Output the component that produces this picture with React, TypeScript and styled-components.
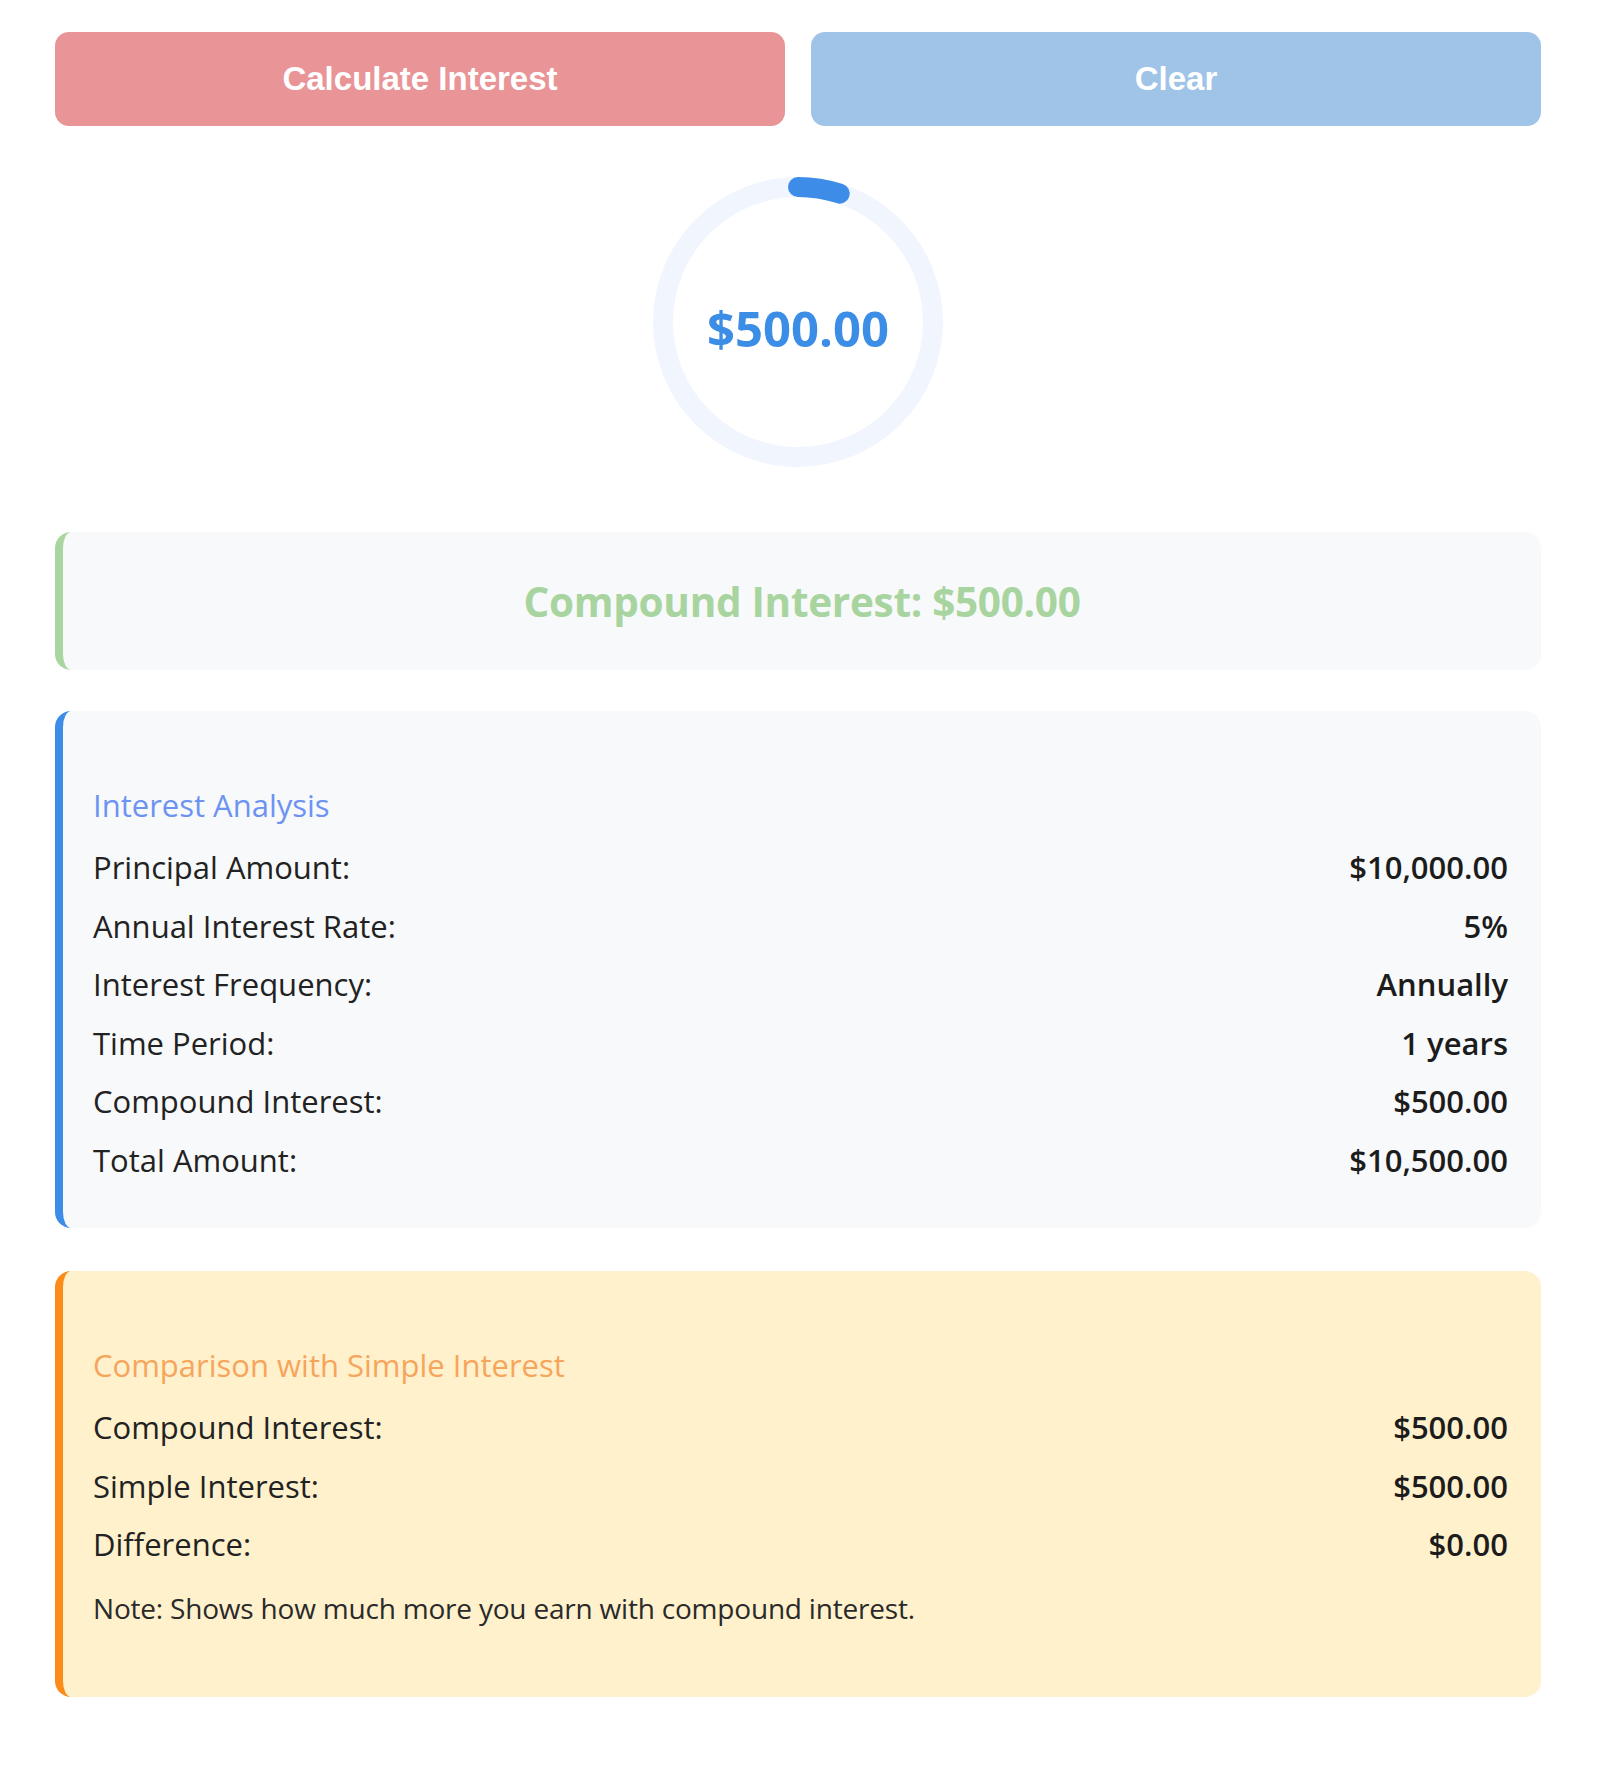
import React from 'react'
import styled, { createGlobalStyle } from 'styled-components'

const GlobalStyle = createGlobalStyle`
	body {
		margin: 0;
		background: #ffffff;
		font-family: "Open Sans", "Noto Sans", sans-serif;
		color: #222222;
	}
`

const Page = styled.div`
	padding: 32px 59px 80px 55px;
`

const ButtonRow = styled.div`
	display: grid;
	grid-template-columns: 1fr 1fr;
	gap: 26px;
`

interface ButtonProps {
	tone: 'red' | 'blue';
}

const ActionButton = styled.button<ButtonProps>`
	height: 94px;
	border: none;
	border-radius: 14px;
	background: ${({ tone }) => tone === 'red' ? '#e99597' : '#9fc4e8'};
	color: #ffffff;
	font-family: "Liberation Sans", Arial, sans-serif;
	font-weight: 700;
	font-size: 33px;
	cursor: pointer;
`

const GaugeWrap = styled.div`
	position: relative;
	width: 300px;
	height: 300px;
	margin: 46px auto 0;
`

const GaugeValue = styled.div`
	position: absolute;
	inset: 0;
	display: flex;
	align-items: center;
	justify-content: center;
	padding-top: 12px;
	box-sizing: border-box;
	font-size: 49px;
	font-weight: 700;
	color: #3b8de6;
`

interface CardProps {
	accent: string;
	bg: string;
}

const Card = styled.div<CardProps>`
	background: ${({ bg }) => bg};
	border-left: 8px solid ${({ accent }) => accent};
	border-radius: 16px;
	box-sizing: border-box;
`

const SummaryCard = styled(Card)`
	margin-top: 60px;
	height: 138px;
	display: flex;
	align-items: center;
	justify-content: center;
`

const SummaryText = styled.div`
	font-size: 40.5px;
	font-weight: 700;
	color: #a8d49f;
	letter-spacing: -0.3px;
`

interface DetailProps {
	gap: number;
}

const DetailCard = styled(Card)<DetailProps>`
	margin-top: ${({ gap }) => gap}px;
	padding: 40px 33px 39px 30px;
`

interface TitleProps {
	color: string;
}

const CardTitle = styled.h4<TitleProps>`
	margin: 32px 0 11px;
	font-size: 31px;
	line-height: 44px;
	font-weight: 400;
	color: ${({ color }) => color};
`

const Row = styled.div`
	display: flex;
	justify-content: space-between;
	align-items: center;
	height: 58.5px;
	font-size: 31px;
`

const Label = styled.span`
	color: #222222;
`

const Value = styled.span`
	font-weight: 600;
	color: #1c1c1c;
`

const Note = styled.p`
	margin: 14px 0 30px;
	font-size: 28px;
	line-height: 40px;
	color: #2a2a2a;
	letter-spacing: -0.2px;
`

const analysis = [
	['Principal Amount:', '$10,000.00'],
	['Annual Interest Rate:', '5%'],
	['Interest Frequency:', 'Annually'],
	['Time Period:', '1 years'],
	['Compound Interest:', '$500.00'],
	['Total Amount:', '$10,500.00'],
]

const comparison = [
	['Compound Interest:', '$500.00'],
	['Simple Interest:', '$500.00'],
	['Difference:', '$0.00'],
]

const Gauge = ({ ratio }: { ratio: number }) => {
	const r = 135
	const c = 2 * Math.PI * r
	return (
		<svg width="300" height="300" viewBox="0 0 300 300">
			<circle cx="150" cy="150" r={r} fill="none" stroke="#f1f5fe" strokeWidth="20" />
			<circle
				cx="150"
				cy="150"
				r={r}
				fill="none"
				stroke="#3d8ce8"
				strokeWidth="20"
				strokeLinecap="round"
				strokeDasharray={`${c * ratio} ${c}`}
				transform="rotate(-90 150 150)"
			/>
		</svg>
	)
}

export default function App() {
	return (
		<>
			<GlobalStyle />
			<Page>
				<ButtonRow>
					<ActionButton tone="red">Calculate Interest</ActionButton>
					<ActionButton tone="blue">Clear</ActionButton>
				</ButtonRow>

				<GaugeWrap>
					<Gauge ratio={0.05} />
					<GaugeValue>$500.00</GaugeValue>
				</GaugeWrap>

				<SummaryCard accent="#a9d5a1" bg="#f8f9fa">
					<SummaryText>Compound Interest: $500.00</SummaryText>
				</SummaryCard>

				<DetailCard gap={41} accent="#3c8ce8" bg="#f8f9fa">
					<CardTitle color="#6d93f2">Interest Analysis</CardTitle>
					{analysis.map(([label, value]) => (
						<Row key={label}>
							<Label>{label}</Label>
							<Value>{value}</Value>
						</Row>
					))}
				</DetailCard>

				<DetailCard gap={43} accent="#fb8c1a" bg="#fff1cc">
					<CardTitle color="#f6a55c">Comparison with Simple Interest</CardTitle>
					{comparison.map(([label, value]) => (
						<Row key={label}>
							<Label>{label}</Label>
							<Value>{value}</Value>
						</Row>
					))}
					<Note>Note: Shows how much more you earn with compound interest.</Note>
				</DetailCard>
			</Page>
		</>
	)
}
